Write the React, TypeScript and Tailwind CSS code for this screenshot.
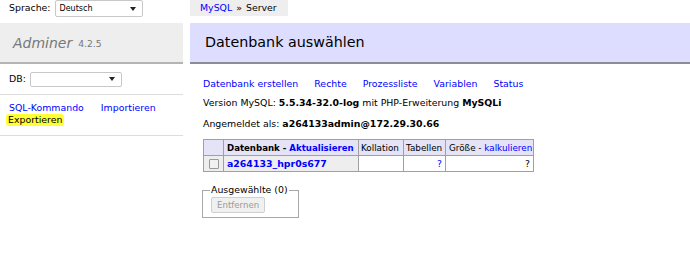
import React from 'react';

const font = { fontFamily: '"DejaVu Sans", Verdana, sans-serif' };

function Select({ value, className }: { value?: string; className: string }) {
  return (
    <div
      className={`flex items-center justify-between bg-white border border-[#c8c8c8] rounded-[2px] pl-[4px] pr-[6px] ${className}`}
    >
      <span className="text-[8px] text-black">{value}</span>
      <svg width="6" height="4" viewBox="0 0 6 4">
        <path d="M0 0 L6 0 L3 4 Z" fill="#222" />
      </svg>
    </div>
  );
}

function Checkbox() {
  return <span className="inline-block w-[10px] h-[10px] border border-[#9a9a9a] bg-[#f2f2f2] rounded-[1px]" />;
}

export default function App() {
  return (
    <div className="flex w-[690px] h-[253px] bg-white text-[9.4px] text-black overflow-hidden" style={font}>
      {/* menu */}
      <div className="w-[183px] shrink-0">
        <div className="h-[23px] flex items-start">
          <span className="ml-[9px] mt-[2px] leading-[12px]">Sprache:</span>
          <Select value="Deutsch" className="ml-[4px] w-[88px] h-[17px]" />
        </div>
        <div className="h-[41px] bg-[#eeeeee] border-b-2 border-[#b4b4b4] flex items-center px-[13px] text-[#777777]">
          <span className="italic text-[14px] leading-none">Adminer</span>
          <span className="ml-[6px] text-[9.2px] mt-[3px]">4.2.5</span>
        </div>
        <div className="h-[31px] flex items-center border-b border-[#dddddd]">
          <span className="ml-[9px]">DB:</span>
          <Select className="ml-[4px] w-[92px] h-[15px]" />
        </div>
        <div className="pt-[7px] pb-[9px] border-b border-[#dddddd] leading-[12px]">
          <div className="flex">
            <a className="ml-[9px] text-[#0000ff]">SQL-Kommando</a>
            <a className="ml-[17px] text-[#0000ff]">Importieren</a>
          </div>
          <div className="ml-[6px]">
            <span className="bg-[#ffff33] rounded-[3px] px-[2px] inline-block leading-[12px]">Exportieren</span>
          </div>
        </div>
      </div>

      {/* content */}
      <div className="flex-1 ml-[7px]">
        <div className="h-[23px]">
          <div className="inline-flex h-[16px] items-center bg-[#eeeeee] px-[10px] pr-[11px]">
            <a className="text-[#0000ff]">MySQL</a>
            <span className="mx-[4px]">»</span>
            <span>Server</span>
          </div>
        </div>
        <h2 className="h-[41px] bg-[#ddddff] border-b-2 border-[#8c8c98] flex items-center pl-[15px] text-[14.3px] font-normal">
          Datenbank auswählen
        </h2>
        <div className="ml-[13px]">
          <div className="mt-[12px] h-[16px] flex items-center gap-[16px] text-[#0000ff]">
            <a>Datenbank erstellen</a>
            <a>Rechte</a>
            <a>Prozessliste</a>
            <a>Variablen</a>
            <a>Status</a>
          </div>
          <div className="mt-[3px] h-[16px] flex items-center whitespace-pre">
            Version MySQL: <b>5.5.34-32.0-log</b> mit PHP-Erweiterung <b>MySQLi</b>
          </div>
          <div className="mt-[5px] h-[16px] flex items-center whitespace-pre">
            Angemeldet als: <b>a264133admin@172.29.30.66</b>
          </div>
          <table className="mt-[7px] border-collapse table-fixed w-[330px] leading-[12px]">
            <colgroup>
              <col className="w-[20px]" />
              <col className="w-[135px]" />
              <col className="w-[45px]" />
              <col className="w-[42px]" />
              <col className="w-[88px]" />
            </colgroup>
            <thead>
              <tr className="h-[16px] bg-[#e4e4f6]">
                <td className="border border-[#a0a0a0]" />
                <th className="border border-[#a0a0a0] font-bold text-left pl-[3px] pr-0 whitespace-nowrap overflow-hidden text-[8.6px]">
                  Datenbank - <a className="text-[#0000ff]">Aktualisieren</a>
                </th>
                <td className="border border-[#a0a0a0] px-[2px] whitespace-nowrap overflow-hidden text-[8.8px]">Kollation</td>
                <td className="border border-[#a0a0a0] px-[2px] whitespace-nowrap overflow-hidden text-[8.8px]">Tabellen</td>
                <td className="border border-[#a0a0a0] px-[3px] whitespace-nowrap overflow-hidden text-[8.8px]">
                  Größe - <a className="text-[#0000ff]">kalkulieren</a>
                </td>
              </tr>
            </thead>
            <tbody>
              <tr className="h-[16px]">
                <td className="border border-[#a0a0a0] bg-[#eeeeee] text-center">
                  <div className="flex justify-center">
                    <Checkbox />
                  </div>
                </td>
                <th className="border border-[#a0a0a0] bg-[#eeeeee] text-left px-[3px]">
                  <a className="text-[#0000ff] font-bold">a264133_hpr0s677</a>
                </th>
                <td className="border border-[#a0a0a0]" />
                <td className="border border-[#a0a0a0] text-right px-[3px] text-[#0000ff]">?</td>
                <td className="border border-[#a0a0a0] text-right px-[3px]">?</td>
              </tr>
            </tbody>
          </table>
          <fieldset className="mt-[12px] w-[97px] border border-[#a8a8a8] px-[8px] pb-[4px] ml-[-1px]">
            <legend className="px-[1px] ml-[-1px] whitespace-nowrap leading-[12px]">Ausgewählte (0)</legend>
            <button
              disabled
              className="mt-[1px] h-[16px] px-[5px] text-[8.6px] text-[#9a9a9a] bg-[#f0f0f0] border border-[#cfcfcf] rounded-[2px] leading-none"
            >
              Entfernen
            </button>
          </fieldset>
        </div>
      </div>
    </div>
  );
}
